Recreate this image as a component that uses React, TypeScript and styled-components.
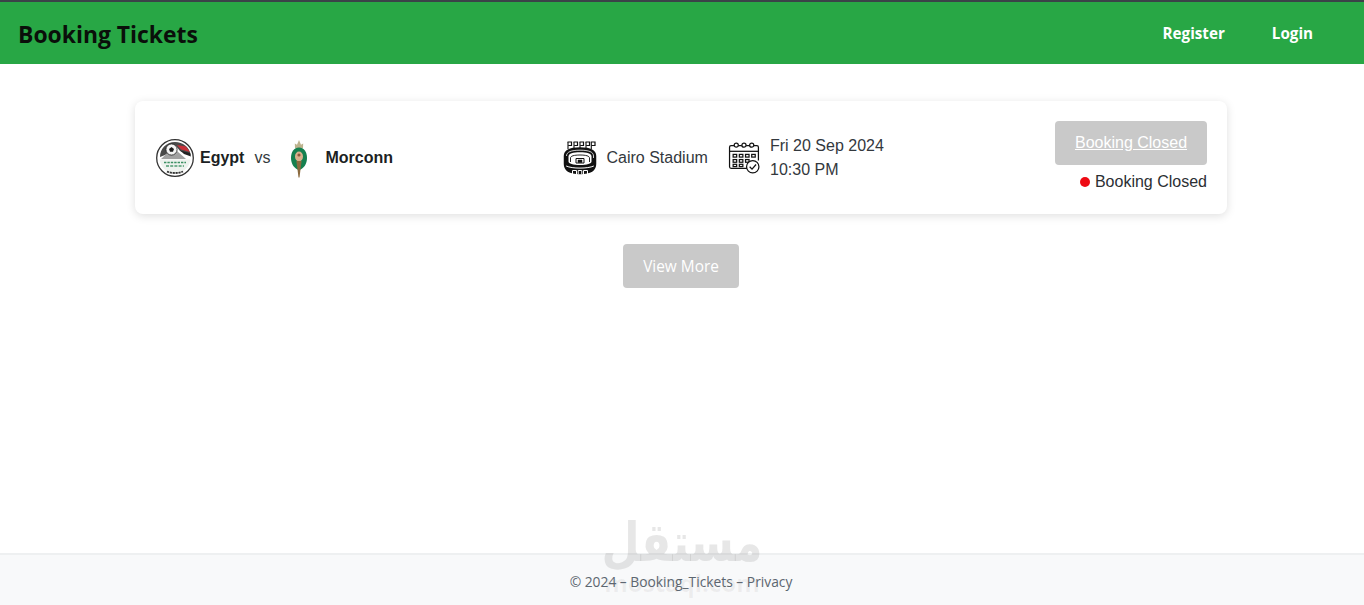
import styled, { createGlobalStyle } from "styled-components";

const GlobalStyle = createGlobalStyle`
  html, body {
    margin: 0;
    padding: 0;
    background: #fff;
    font-family: "Liberation Sans", Arial, sans-serif;
  }
`;

const EgyptBadge = () => (
  <svg width="38" height="38" viewBox="0 0 38 38">
    <circle cx="19" cy="19" r="18.3" fill="#fff" stroke="#333" strokeWidth="1.3" />
    <path d="M4 18 C4 10 10 3 19 3 C27 3 33 8 35 16 L24 12 L20 7 L15 12 L9 16 Z" fill="#4a4a4a" />
    <path d="M21 6 L30 7.5 L34 13 L25 10.5 Z" fill="#c9313a" />
    <path d="M24 11.5 L34 14 L35 17.5 L28 15 Z" fill="#222" />
    <path d="M5 20 L13 12.5 L17 16 L21 12 L30 20 Z" fill="#a2a2a2" />
    <circle cx="15.5" cy="10.5" r="5.6" fill="#f6f6f6" stroke="#1e1e1e" strokeWidth="0.8" />
    <path d="M15.5 8 L18 10 L17 12.8 L14 12.8 L13 10 Z" fill="#1e1e1e" />
    <path d="M3.6 20.5 H34.4 A15.5 15.5 0 0 1 3.6 20.5 Z" fill="#eef2ee" />
    <path d="M8 23.5 H30" stroke="#3c9163" strokeWidth="1.7" strokeDasharray="2.4 1" />
    <path d="M10 27 H28" stroke="#4f9c72" strokeWidth="1.7" strokeDasharray="3 1.2" />
    <path d="M11 32.5 C15 34.5 23 34.5 27 32.5" fill="none" stroke="#333" strokeWidth="1.8" strokeDasharray="2.2 0.7" />
  </svg>
);

const MoroccoBadge = () => (
  <svg width="20" height="40" viewBox="0 0 20 40">
    <path d="M6 10 L5.8 5.5 L8 6.8 L10 2 L12 6.8 L14.2 5.5 L14 10 Z" fill="#bdb38e" />
    <path d="M10 9.5 C15 9.5 18 14 18 20 C18 26 14.5 31 10 32 C5.5 31 2 26 2 20 C2 14 5 9.5 10 9.5 Z" fill="#15804f" />
    <ellipse cx="10" cy="18.5" rx="4" ry="5" fill="#d8b08c" />
    <circle cx="10" cy="17" r="1.6" fill="#8f5a3c" />
    <path d="M7.4 23 H12.6 L10.5 39.5 H9.5 Z" fill="#8b6a3f" />
  </svg>
);

const StadiumIcon = () => (
  <svg width="34" height="34" viewBox="0 0 34 34" fill="none" stroke="#111" strokeWidth="1.5">
    <path d="M4.5 1 H8.5 V4.5 H5.2 M10.5 1 H14.5 V4.5 H11.2 M16.5 1 H20.5 V4.5 H17.2 M22.5 1 H26.5 V4.5 H23.2 M27.8 1 H32 V4.5 H28.5" strokeWidth="1.2" />
    <path d="M5 1 V8 M11 1 V8 M17 1 V8 M23 1 V8 M28.3 1 V8" strokeWidth="1.1" />
    <path d="M1.5 15 C1.5 9 7 7 17 7 C27 7 32.5 9 32.5 15 V23 C32.5 29 27 32.5 17 32.5 C7 32.5 1.5 29 1.5 23 Z" fill="#111" />
    <path d="M3.5 15 C3.5 11 8 9.2 17 9.2 C26 9.2 30.5 11 30.5 15 V17" stroke="#fff" strokeWidth="0.8" />
    <path d="M5.5 15.5 C5.5 12.5 10 11.3 17 11.3 C24 11.3 28.5 12.5 28.5 15.5 V20.5 C28.5 22.5 24 24 17 24 C10 24 5.5 22.5 5.5 20.5 Z" fill="#fff" stroke="none" />
    <path d="M7.5 21 V17 C7.5 15 11 14 17 14 C23 14 26.5 15 26.5 17 V21" strokeWidth="0.9" />
    <path d="M13 22 V17.5 H21 V22 Z" strokeWidth="1" />
    <path d="M15 21.5 V19 H19 V21.5 Z" fill="#111" strokeWidth="0.5" />
    <path d="M3.2 25 C9 27.8 25 27.8 30.8 25" stroke="#fff" strokeWidth="1" />
    <path d="M9.5 33 V29.5 H13.5 V33 M15.2 33 V29.5 H18.8 V33 M20.5 33 V29.5 H24.5 V33" stroke="#fff" strokeWidth="1" />
  </svg>
);

const CalendarIcon = () => (
  <svg width="33" height="33" viewBox="0 0 32 32" fill="none" stroke="#111" strokeWidth="1.2">
    <path d="M22 26.5 H3 C2 26.5 1.5 26 1.5 25 V6 C1.5 5 2 4.5 3 4.5 H28 C29 4.5 29.5 5 29.5 6 V19" />
    <path d="M1.5 10 H29.5" />
    <circle cx="8" cy="4" r="2" fill="#fff" />
    <circle cx="15.5" cy="4" r="2" fill="#fff" />
    <circle cx="23" cy="4" r="2" fill="#fff" />
    <rect x="5" y="13" width="3.4" height="2.6" />
    <rect x="11" y="13" width="3.4" height="2.6" />
    <rect x="17" y="13" width="3.4" height="2.6" />
    <rect x="23" y="13" width="3.4" height="2.6" />
    <rect x="5" y="18" width="3.4" height="2.6" />
    <rect x="11" y="18" width="3.4" height="2.6" />
    <rect x="17" y="18" width="3.4" height="2.6" />
    <rect x="5" y="22.6" width="3.4" height="2.2" />
    <rect x="11" y="22.6" width="3.4" height="2.2" />
    <circle cx="24" cy="25" r="6" fill="#fff" />
    <path d="M21 25 L23.3 27.3 L27.2 22.8" />
  </svg>
);

export default function App() {
  return (
    <>
      <GlobalStyle />
      <Page>
        <Navbar>
          <Brand>Booking Tickets</Brand>
          <NavLinks>
            <NavLink href="#">Register</NavLink>
            <NavLink href="#">Login</NavLink>
          </NavLinks>
        </Navbar>

        <Main>
          <MatchCard>
            <Teams>
              <Team>
                <EgyptBadge />
                <TeamName>Egypt</TeamName>
              </Team>
              <Versus>vs</Versus>
              <Team>
                <MoroccoBadge />
                <TeamName $wide>Morconn</TeamName>
              </Team>
            </Teams>
            <Venue>
              <StadiumIcon />
              <span>Cairo Stadium</span>
            </Venue>
            <Schedule>
              <CalendarIcon />
              <DateText>
                <span>Fri 20 Sep 2024</span>
                <span>10:30 PM</span>
              </DateText>
            </Schedule>
            <Booking>
              <BookButton href="#">Booking Closed</BookButton>
              <Status>
                <StatusDot />
                Booking Closed
              </Status>
            </Booking>
          </MatchCard>
          <ViewMore>View More</ViewMore>
        </Main>

        <Footer>
          <span>© 2024 – Booking_Tickets – Privacy</span>
          <Watermark aria-hidden="true">
            <WatermarkLogo>مستقل</WatermarkLogo>
            <WatermarkSite>mostaql.com</WatermarkSite>
          </Watermark>
        </Footer>
      </Page>
    </>
  );
}

const Page = styled.div`
  display: flex;
  flex-direction: column;
  height: 605px;
  overflow: hidden;
  position: relative;
`;

const Navbar = styled.header`
  display: flex;
  align-items: center;
  justify-content: space-between;
  box-sizing: border-box;
  height: 64px;
  padding: 0 51px 0 18px;
  background: #28a745;
  border-top: 2px solid #3b4248;
`;

const Brand = styled.div`
  font-family: "Open Sans", sans-serif;
  font-size: 22.9px;
  font-weight: 700;
  color: #0a0f0a;
  padding-top: 2px;
`;

const NavLinks = styled.nav`
  display: flex;
  gap: 47px;
`;

const NavLink = styled.a`
  font-family: "Open Sans", sans-serif;
  font-size: 15.2px;
  font-weight: 700;
  color: #fff;
  text-decoration: none;
`;

const Main = styled.main`
  flex: 1;
  display: flex;
  flex-direction: column;
  align-items: center;
  padding-top: 37px;
  padding-right: 2px;
`;

const MatchCard = styled.section`
  display: flex;
  align-items: center;
  box-sizing: border-box;
  width: 1092px;
  height: 113px;
  padding: 0 20px 0 21px;
  background: #fff;
  border-radius: 8px;
  box-shadow: 0 2px 10px rgba(0, 0, 0, 0.13);
  font-size: 16px;
  color: #212529;
`;

const Teams = styled.div`
  display: flex;
  align-items: center;
  width: 406.5px;
`;

const Team = styled.div`
  display: flex;
  align-items: center;
`;

const TeamName = styled.span<{ $wide?: boolean }>`
  margin-left: ${(p) => (p.$wide ? "16px" : "6px")};
  font-weight: 700;
  color: #1c1f23;
`;

const Versus = styled.span`
  margin: 0 19px 0 10px;
  color: #343a40;
`;

const Venue = styled.div`
  display: flex;
  align-items: center;
  gap: 10px;
  width: 165.5px;
  color: #33383d;
`;

const Schedule = styled.div`
  flex: 1;
  display: flex;
  align-items: center;
  gap: 9px;
`;

const DateText = styled.div`
  display: flex;
  flex-direction: column;
  line-height: 24px;
  color: #33383d;
`;

const Booking = styled.div`
  display: flex;
  flex-direction: column;
  align-items: flex-end;
  gap: 5px;
`;

const BookButton = styled.a`
  display: flex;
  align-items: center;
  justify-content: center;
  width: 152px;
  height: 44px;
  background: #c9c9c9;
  border-radius: 4px;
  color: #fff;
  text-decoration: underline;
`;

const Status = styled.div`
  display: flex;
  align-items: center;
  gap: 5px;
  line-height: 24px;
  color: #2b2f33;
`;

const StatusDot = styled.span`
  width: 10px;
  height: 10px;
  border-radius: 50%;
  background: #ee0a14;
`;

const ViewMore = styled.button`
  width: 116px;
  height: 44px;
  margin-top: 30px;
  border: none;
  border-radius: 4px;
  background: #c9c9c9;
  color: #fff;
  font-family: "Open Sans", sans-serif;
  font-size: 15.4px;
`;

const Footer = styled.footer`
  position: relative;
  display: flex;
  align-items: center;
  justify-content: center;
  box-sizing: border-box;
  height: 52px;
  padding: 2px 2px 0 0;
  background: #f8f9fa;
  border-top: 2px solid #eef0f1;
  font-family: "Open Sans", sans-serif;
  font-size: 13.8px;
  color: #5c6670;
`;

const Watermark = styled.div`
  position: absolute;
  left: 50%;
  top: -40px;
  transform: translateX(-50%);
  display: flex;
  flex-direction: column;
  align-items: center;
  pointer-events: none;
`;

const WatermarkLogo = styled.span`
  font-family: "DejaVu Sans", sans-serif;
  font-size: 44px;
  font-weight: 700;
  line-height: 56px;
  color: rgba(120, 120, 120, 0.18);
  transform: scaleY(1.22);
`;

const WatermarkSite = styled.span`
  font-family: "Open Sans", sans-serif;
  font-size: 24px;
  font-weight: 700;
  line-height: 24px;
  color: rgba(120, 120, 120, 0.09);
`;
